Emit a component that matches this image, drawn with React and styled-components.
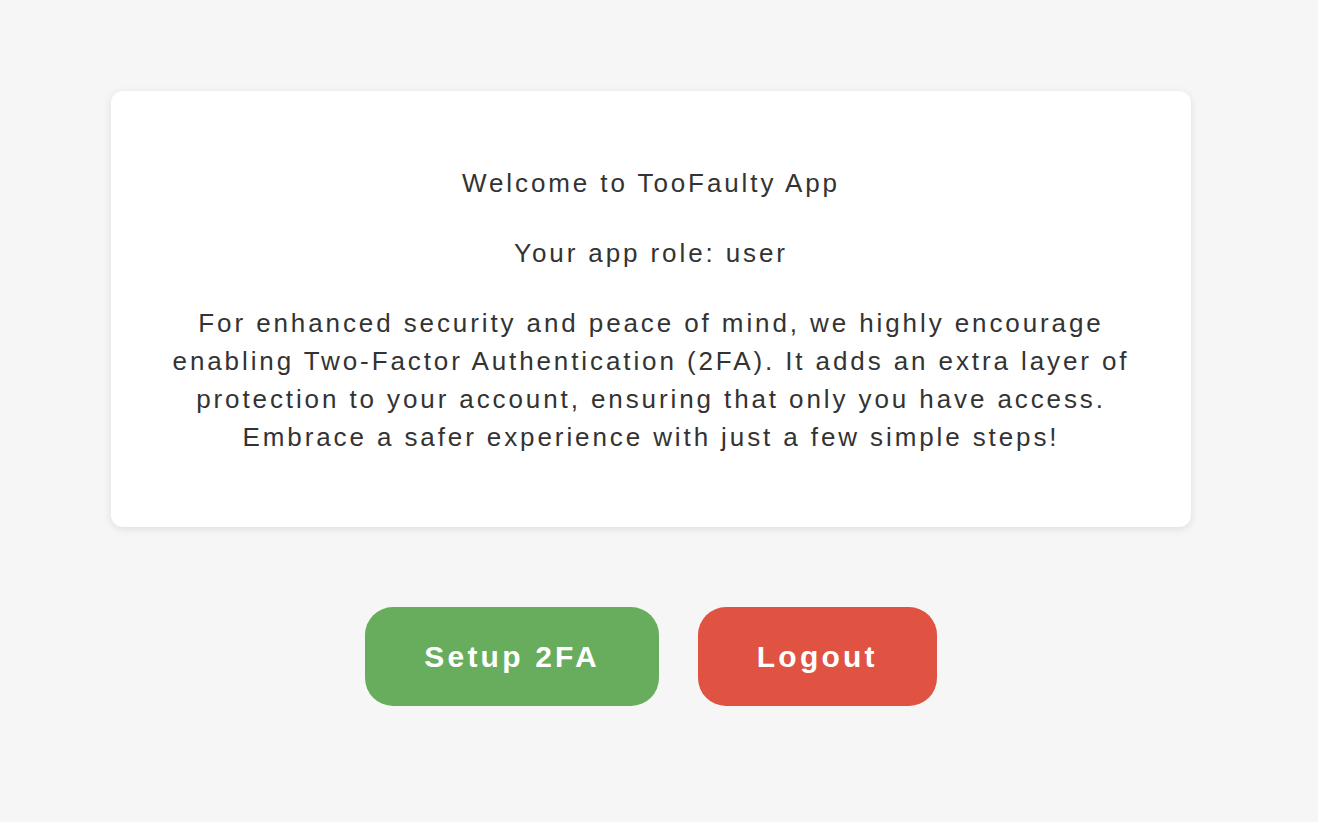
import React from "react";
import styled, { createGlobalStyle } from "styled-components";

const GlobalStyle = createGlobalStyle`
  html, body {
    margin: 0;
    padding: 0;
    background: #f6f6f6;
    font-family: "Liberation Sans", Arial, Helvetica, sans-serif;
    color: #333;
  }
`;

const Page = styled.main`
  display: flex;
  flex-direction: column;
  align-items: center;
  padding: 91px 16px 0 0;
  min-height: 822px;
  box-sizing: border-box;
`;

const Card = styled.section`
  width: 1080px;
  box-sizing: border-box;
  background: #fff;
  border-radius: 12px;
  box-shadow: 0 2px 8px rgba(0, 0, 0, 0.1);
  padding: 73px 30px 71px;
  display: flex;
  flex-direction: column;
  align-items: center;
  gap: 32px;
  text-align: center;
`;

const Text = styled.p`
  margin: 0;
  font-size: 26px;
  line-height: 38px;
  letter-spacing: 2.9px;
`;

const Actions = styled.div`
  display: flex;
  gap: 39px;
  margin-top: 80px;
`;

const Button = styled.button`
  height: 99px;
  padding: 0 59px;
  border: none;
  border-radius: 28px;
  background: ${(p) => p.$bg};
  color: #fff;
  font-family: "Liberation Sans", Arial, Helvetica, sans-serif;
  font-weight: bold;
  font-size: 30px;
  letter-spacing: 3.2px;
  cursor: pointer;
`;

export default function App() {
  return (
    <>
      <GlobalStyle />
      <Page>
        <Card>
          <Text>Welcome to TooFaulty App</Text>
          <Text>Your app role: user</Text>
          <Text>
            For enhanced security and peace of mind, we highly encourage
            <br />
            enabling Two-Factor Authentication (2FA). It adds an extra layer of
            <br />
            protection to your account, ensuring that only you have access.
            <br />
            Embrace a safer experience with just a few simple steps!
          </Text>
        </Card>
        <Actions>
          <Button $bg="#68ad5d">Setup 2FA</Button>
          <Button $bg="#e05342">Logout</Button>
        </Actions>
      </Page>
    </>
  );
}
